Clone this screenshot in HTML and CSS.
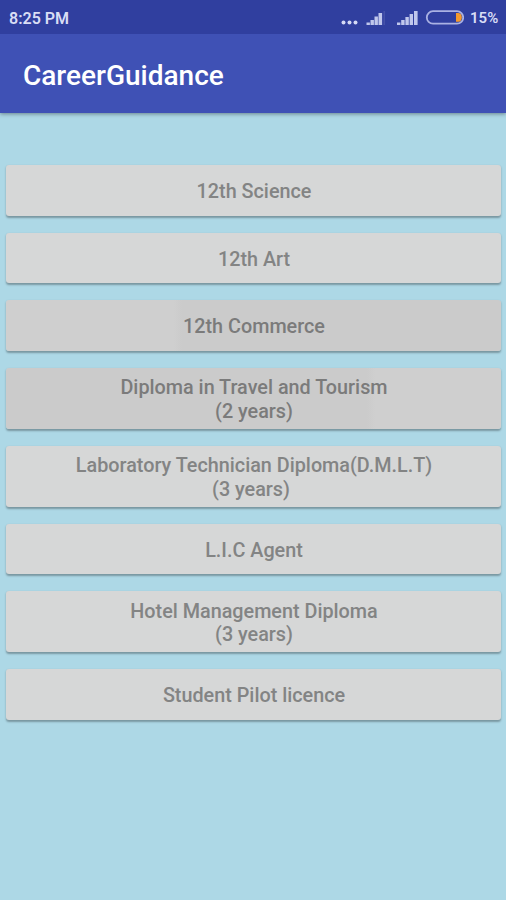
FILE: index.html
```html
<!DOCTYPE html>
<html lang="en">
<head>
    <meta charset="UTF-8">
    <meta name="viewport" content="width=device-width, initial-scale=1.0">
    <title>CareerGuidance</title>
    <link rel="stylesheet" href="styles.css">
</head>
<body>
    <div class="status-bar">
        <span class="time">8:25 PM</span>
        <svg class="status-icons" width="124" height="18" viewBox="0 0 124 18">
            <!-- notifications -->
            <g fill="#d5daf5">
                <circle cx="3.5" cy="13.5" r="2"/>
                <circle cx="9.5" cy="13.5" r="2"/>
                <circle cx="15.5" cy="13.5" r="2"/>
            </g>
            <!-- signal, sim 1 -->
            <g fill="#c0c7ec">
                <rect x="26.5" y="13.5" width="3.4" height="2.5"/>
                <rect x="30.5" y="11" width="3.4" height="5"/>
                <rect x="34.5" y="7.5" width="3.4" height="8.5"/>
                <rect x="38.5" y="4" width="3.6" height="12"/>
                <rect x="43.5" y="2" width="1.5" height="14" fill="#4552a9"/>
            </g>
            <!-- signal, sim 2 -->
            <g fill="#c0c7ec">
                <rect x="57" y="13.5" width="3.4" height="2.5"/>
                <rect x="61.2" y="11" width="3.4" height="5"/>
                <rect x="65.4" y="8" width="3.4" height="8"/>
                <rect x="69.6" y="5" width="3.4" height="11"/>
                <rect x="74" y="2" width="3.6" height="14"/>
            </g>
            <!-- battery -->
            <rect x="86.8" y="2.2" width="36.4" height="12.4" rx="6.2" fill="none" stroke="#aab2e3" stroke-width="1.8"/>
            <path d="M116 4h2.5c4.4 0 4.4 8.8 0 8.8H116z" fill="#f59a2d"/>
        </svg>
        <span class="percent">15%</span>
    </div>
    <header class="toolbar">
        <h1>CareerGuidance</h1>
    </header>
    <main class="courses">
        <button class="course">12th Science</button>
        <button class="course">12th Art</button>
        <button class="course pressed">12th Commerce</button>
        <button class="course tall pressed-right">Diploma in Travel and Tourism<br>(2 years)</button>
        <button class="course tall">Laboratory Technician Diploma(D.M.L.T)<br><span class="years">(3 years)</span></button>
        <button class="course">L.I.C Agent</button>
        <button class="course tall">Hotel Management Diploma<br>(3 years)</button>
        <button class="course">Student Pilot licence</button>
    </main>
</body>
</html>
```
FILE: styles.css
```css
* { box-sizing: border-box; }
body { margin: 0; height: 900px; overflow: hidden; background-color: #add8e6; font-family: Roboto, sans-serif; }

.status-bar { display: flex; position: relative; z-index: 1; align-items: center; height: 34px; padding: 2px 8px 0 9px; background-color: #303f9f; color: #d9ddf5; font-size: 16px; font-weight: 600; }
.time { flex: 1; }
.status-icons { margin-right: 6px; }
.percent { width: 28px; font-size: 15px; }

.toolbar { display: flex; align-items: center; height: 79px; padding: 3px 23px 0; background-color: #3f51b5; box-shadow: 0 1px 4px rgba(0,0,0,0.4); }
.toolbar h1 { margin: 0; color: #fff; font-size: 28px; font-weight: 500; }

.courses { display: flex; flex-direction: column; gap: 17px; padding: 52px 5px 0 6px; }
.course { height: 50.5px; padding: 3px 0 0 1px; border: none; border-radius: 3px; background-color: #d6d7d7; color: #838484; font-family: inherit; font-size: 19.8px; font-weight: 500; line-height: 23.4px; box-shadow: 0 1.5px 2px rgba(0,0,0,0.3); }
.tall { height: 61px; }
.pressed { background: linear-gradient(to right, #cfcfcf 168px, #cbcbcb 176px); color: #7b7b7b; }
.pressed-right { background: linear-gradient(to right, #cbcbcb 361px, #cfcfcf 369px); color: #7b7b7b; }
.years { padding-right: 6px; }
```
